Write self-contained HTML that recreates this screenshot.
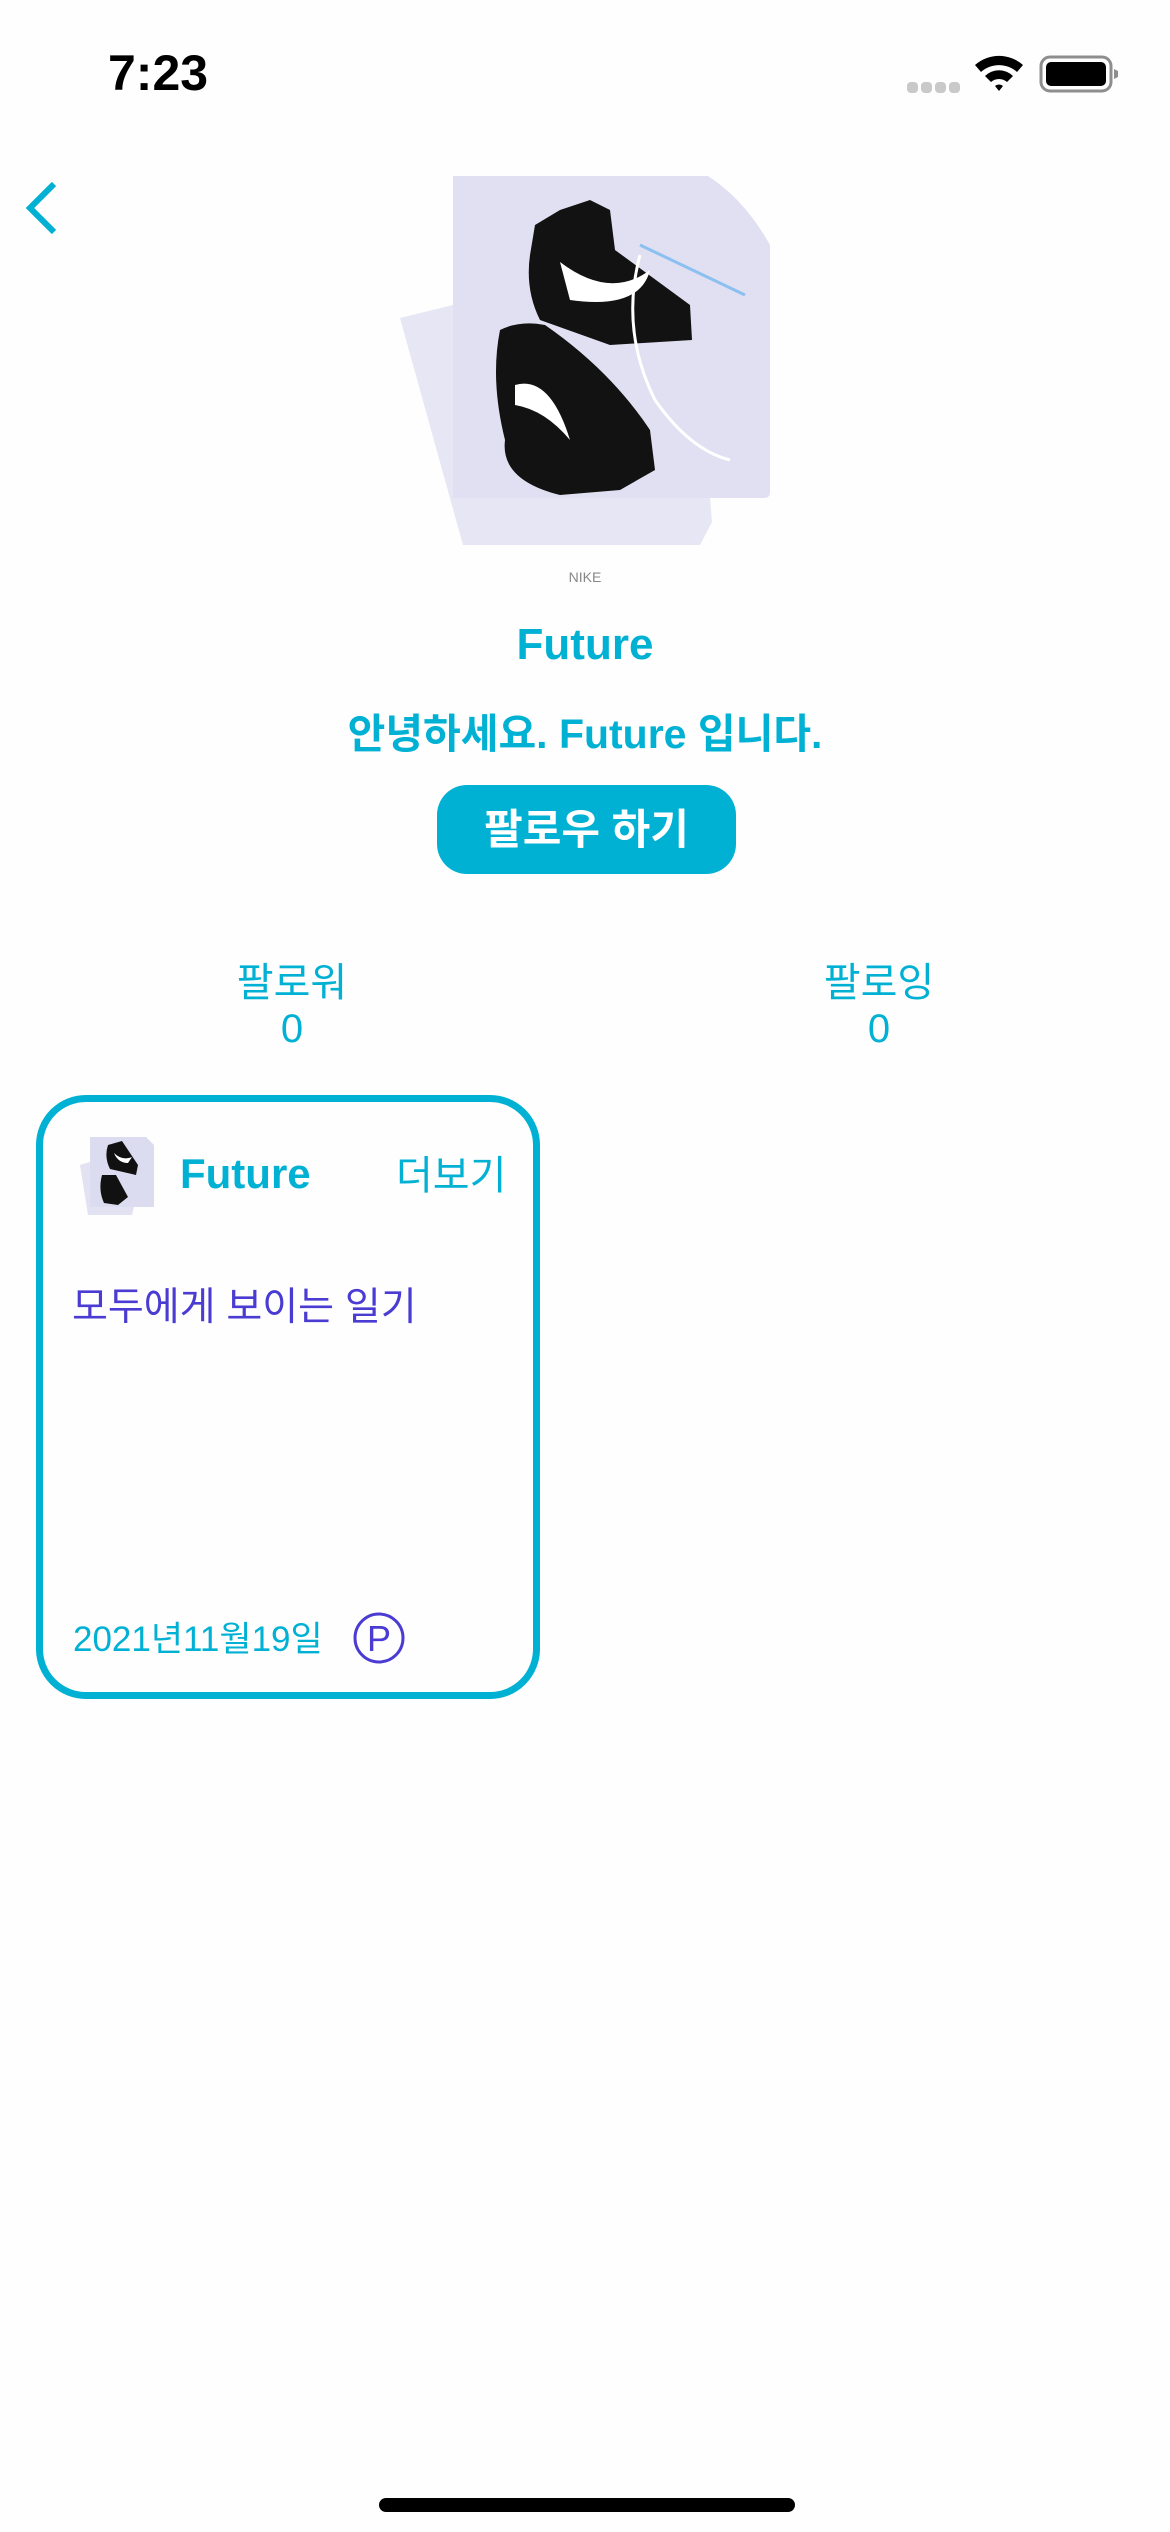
<!DOCTYPE html>
<html><head><meta charset="utf-8">
<style>
html,body{margin:0;padding:0;background:#fefefe;}
body{width:1170px;height:2532px;position:relative;overflow:hidden;font-family:"Liberation Sans","Noto Sans CJK KR",sans-serif;}
.a{position:absolute;}
.c{color:#00b1d4;}
.ctr{left:0;width:1170px;text-align:center;}
</style></head><body>
<div class="a" style="left:108px;top:44px;font-size:50px;font-weight:bold;color:#000;">7:23</div>
<svg class="a" style="left:905px;top:52px" width="230" height="46" viewBox="0 0 230 46">
 <g fill="#c9c9c9"><rect x="2" y="30" width="11" height="11" rx="4"/><rect x="16" y="30" width="11" height="11" rx="4"/><rect x="30" y="30" width="11" height="11" rx="4"/><rect x="44" y="30" width="11" height="11" rx="4"/></g>
 <path d="M70 13 A36 36 0 0 1 118 13 L112 20 A27 27 0 0 0 76 20Z M80 24 A20 20 0 0 1 108 24 L102 30 A12 12 0 0 0 86 30Z M90 34 L94 39 L98 34 A6 6 0 0 0 90 34Z" fill="#000"/>
 <rect x="136" y="5" width="70" height="34" rx="9" fill="none" stroke="#8e8e8e" stroke-width="3"/>
 <rect x="141" y="10" width="60" height="24" rx="5" fill="#000"/>
 <path d="M209 17 L213 19 L213 25 L209 27Z" fill="#8e8e8e"/>
</svg>
<svg class="a" style="left:20px;top:180px" width="44" height="56" viewBox="0 0 44 56"><path d="M34 4 L10 28 L34 52" fill="none" stroke="#00b1d4" stroke-width="6"/></svg>
<svg class="a" style="left:395px;top:170px" width="390" height="385" viewBox="395 170 390 385">
 <polygon points="400,318 453,305 453,498 710,498 712,522 700,545 463,545" fill="#e6e6f4"/>
 <path d="M453 176 L708 176 Q745 200 770 245 L770 492 Q770 498 764 498 L453 498Z" fill="#e0e0f2"/>
 <path d="M535 225 L560 210 L590 200 L610 210 L615 250 L690 305 L692 340 L610 345 L540 320 Q525 290 530 255Z" fill="#121212"/>
 <path d="M560 262 Q610 300 650 270 Q640 310 570 300Z" fill="#fff"/>
 <path d="M500 330 Q520 320 545 325 Q610 370 650 430 L655 470 L620 490 L560 495 Q500 480 505 440 Q490 380 500 330Z" fill="#121212"/>
 <path d="M515 385 Q550 375 570 440 Q545 410 515 405Z" fill="#fff"/>
 <path d="M640 255 Q620 330 655 400 Q690 450 730 460" stroke="#fff" stroke-width="3" fill="none"/>
 <path d="M640 245 L745 295" stroke="#8cc0f0" stroke-width="3"/>
</svg>
<div class="a ctr" style="top:569px;font-size:14px;color:#888;">NIKE</div>
<div class="a ctr c" style="top:620px;font-size:44px;font-weight:bold;">Future</div>
<div class="a ctr c" style="top:700px;font-size:41px;font-weight:bold;">안녕하세요. Future 입니다.</div>
<div class="a" style="left:437px;top:785px;width:299px;height:89px;border-radius:30px;background:#00b1d4;color:#fff;font-size:42px;font-weight:bold;text-align:center;line-height:89px;">팔로우 하기</div>
<div class="a c" style="left:192px;width:200px;top:960px;text-align:center;font-size:40px;line-height:46px;">팔로워<br>0</div>
<div class="a c" style="left:779px;width:200px;top:960px;text-align:center;font-size:40px;line-height:46px;">팔로잉<br>0</div>
<div class="a" style="left:36px;top:1095px;width:490px;height:590px;border:7px solid #00b1d4;border-radius:50px;"></div>
<svg class="a" style="left:78px;top:1135px" width="80" height="84" viewBox="0 0 80 84">
 <polygon points="2,30 12,27 12,72 56,72 54,80 10,80" fill="#e2e2f2"/>
 <path d="M12 2 L68 2 L76 10 L76 72 L12 72Z" fill="#dcdcf0"/>
 <path d="M30 10 L44 6 L60 30 L58 40 L32 34 Q26 22 30 10Z" fill="#111"/>
 <path d="M24 40 L38 40 L50 62 L40 70 L26 68 Q20 55 24 40Z" fill="#111"/>
 <path d="M36 18 Q44 26 54 22 L50 28 Q40 28 36 18Z" fill="#fff"/>
</svg>
<div class="a c" style="left:180px;top:1150px;font-size:42px;font-weight:bold;">Future</div>
<div class="a c" style="left:396px;top:1143px;font-size:40px;">더보기</div>
<div class="a" style="left:72px;top:1276px;font-size:39px;color:#4a3bd2;">모두에게 보이는 일기</div>
<div class="a c" style="left:73px;top:1611px;font-size:35px;">2021년11월19일</div>
<svg class="a" style="left:351px;top:1610px" width="56" height="56" viewBox="0 0 56 56"><circle cx="28" cy="28" r="24" fill="none" stroke="#4a3bd2" stroke-width="3"/><text x="28" y="41" font-size="36" text-anchor="middle" fill="#4a3bd2" font-family="Liberation Sans, sans-serif">P</text></svg>
<div class="a" style="left:379px;top:2498px;width:416px;height:14px;border-radius:7px;background:#000;"></div>
</body></html>
